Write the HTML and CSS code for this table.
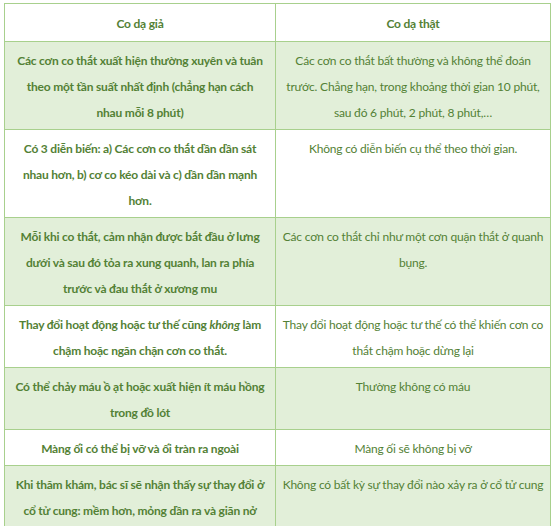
FILE: index.html
```html
<!DOCTYPE html>
<html lang="vi">
<head>
<meta charset="utf-8">
<link rel="stylesheet" href="styles.css">
</head>
<body>
<table class="compare">
  <colgroup><col class="col-left"><col class="col-right"></colgroup>
  <thead>
    <tr class="head"><th>Co dạ giả</th><th>Co dạ thật</th></tr>
  </thead>
  <tbody>
    <tr class="alt">
      <td class="b">Các cơn co thắt xuất hiện thường xuyên và tuân<br>theo một tần suất nhất định (chẳng hạn cách<br>nhau mỗi 8 phút)</td>
      <td>Các cơn co thắt bất thường và không thể đoán<br>trước. Chẳng hạn, trong khoảng thời gian 10 phút,<br>sau đó 6 phút, 2 phút, 8 phút,…</td>
    </tr>
    <tr>
      <td class="b">Có 3 diễn biến: a) Các cơn co thắt dần dần sát<br>nhau hơn, b) cơ co kéo dài và c) dần dần mạnh<br>hơn.</td>
      <td>Không có diễn biến cụ thể theo thời gian.</td>
    </tr>
    <tr class="alt">
      <td class="b">Mỗi khi co thắt, cảm nhận được bắt đầu ở lưng<br>dưới và sau đó tỏa ra xung quanh, lan ra phía<br>trước và đau thắt ở xương mu</td>
      <td>Các cơn co thắt chỉ như một cơn quặn thắt ở quanh<br>bụng.</td>
    </tr>
    <tr>
      <td class="b">Thay đổi hoạt động hoặc tư thế cũng <em>không</em> làm<br>chậm hoặc ngăn chặn cơn co thắt.</td>
      <td>Thay đổi hoạt động hoặc tư thế có thể khiến cơn co<br>thắt chậm hoặc dừng lại</td>
    </tr>
    <tr class="alt">
      <td class="b">Có thể chảy máu ồ ạt hoặc xuất hiện ít máu hồng<br>trong đồ lót</td>
      <td>Thường không có máu</td>
    </tr>
    <tr>
      <td class="b">Màng ối có thể bị vỡ và ối tràn ra ngoài</td>
      <td>Màng ối sẽ không bị vỡ</td>
    </tr>
    <tr class="alt">
      <td class="b">Khi thăm khám, bác sĩ sẽ nhận thấy sự thay đổi ở<br>cổ tử cung: mềm hơn, mỏng dần ra và giãn nở</td>
      <td>Không có bất kỳ sự thay đổi nào xảy ra ở cổ tử cung</td>
    </tr>
  </tbody>
</table>
</body>
</html>
```
FILE: styles.css
```css
html, body {
  margin: 0;
  background: #ffffff;
}
body {
  padding: 3px 0 0 4px;
  font-family: Lato, "Open Sans", sans-serif;
  font-size: 12px;
  letter-spacing: -0.2px;
  color: #538135;
}
.compare {
  border-collapse: collapse;
  width: 546px;
  table-layout: fixed;
}
.col-left { width: 271px; }
.col-right { width: 275px; }
.compare th,
.compare td {
  border: 1px solid #a8d08d;
  padding: 6px 2px 3px;
  line-height: 26px;
  text-align: center;
  vertical-align: top;
  white-space: nowrap;
}
.compare th {
  font-weight: 700;
  padding-top: 7px;
  padding-bottom: 4px;
}
.compare td { font-weight: 400; }
.compare td.b { font-weight: 700; }
.compare em { font-style: italic; }
.alt td { background: #e2efd9; }
```
